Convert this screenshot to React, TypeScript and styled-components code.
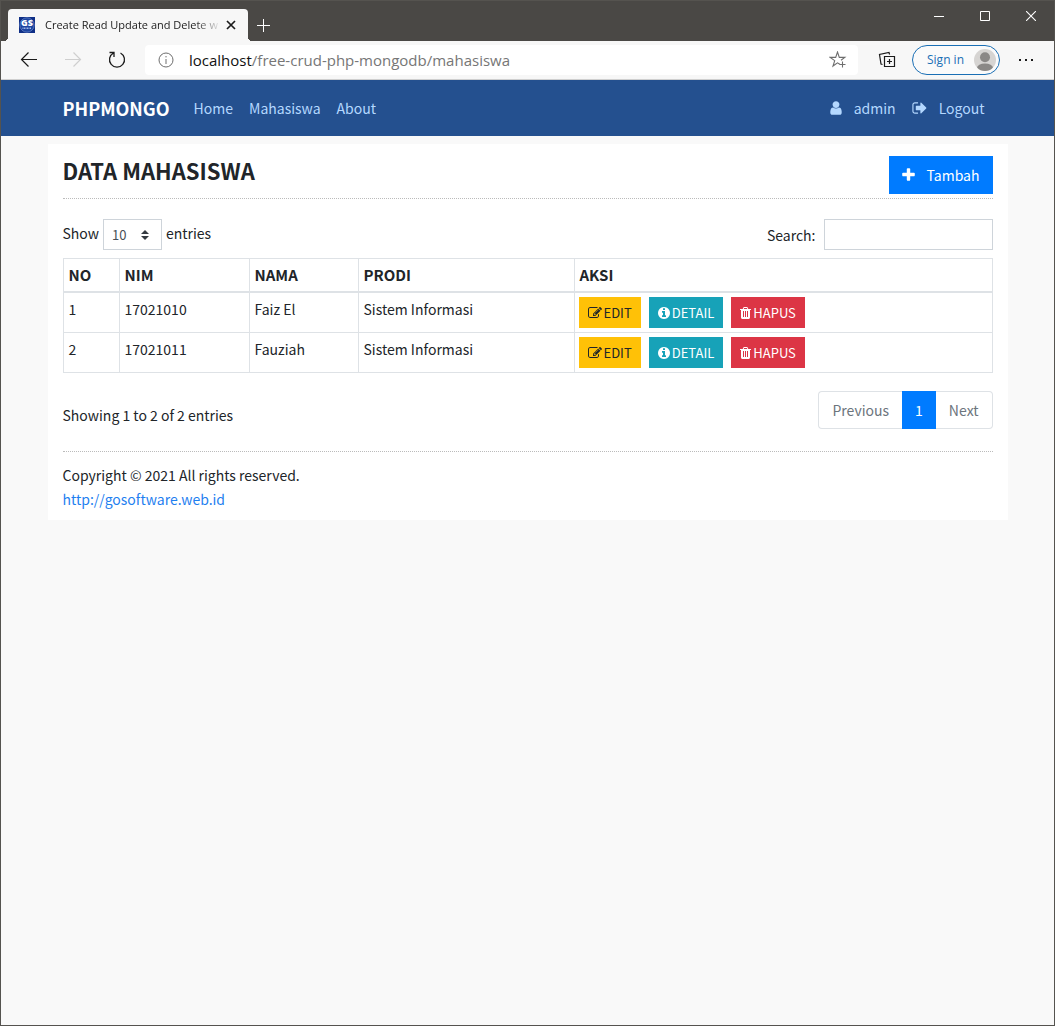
import React from "react";
import styled, { createGlobalStyle } from "styled-components";

const pageFont = `"Noto Sans CJK SC", "Open Sans", sans-serif`;
const chromeFont = `"Open Sans", "Noto Sans", sans-serif`;

const GlobalStyle = createGlobalStyle`
  *, *::before, *::after { box-sizing: border-box; }
  body { margin: 0; background: #f9f9f9; }
  button, input, select { font: inherit; }
`;

/* ---------- browser window ---------- */

const Window = styled.div`
  display: flex;
  flex-direction: column;
  min-height: 100vh;
  border: 1px solid #55534f;
  background: #f9f9f9;
  font-family: ${pageFont};
  font-size: 14px;
  line-height: 24px;
  color: #212529;
`;

const TitleBar = styled.div`
  display: flex;
  align-items: flex-end;
  height: 40px;
  padding-left: 7px;
  background: #4a4845;
  font-family: ${chromeFont};
`;

const Tab = styled.div`
  position: relative;
  display: flex;
  align-items: center;
  width: 240px;
  height: 32px;
  padding: 0 8px 0 11px;
  border-radius: 4px 4px 0 0;
  background: #f7f7f7;
  color: #1b1b1b;

  &::before,
  &::after {
    content: "";
    position: absolute;
    bottom: 0;
    width: 4px;
    height: 4px;
  }
  &::before {
    left: -4px;
    background: radial-gradient(circle at 0 0, transparent 4px, #f7f7f7 4px);
  }
  &::after {
    right: -4px;
    background: radial-gradient(circle at 100% 0, transparent 4px, #f7f7f7 4px);
  }
`;

const TabTitle = styled.span`
  flex: 1;
  min-width: 0;
  margin-left: 10px;
  overflow: hidden;
  white-space: nowrap;
  font-size: 11px;
  line-height: 20px;
  mask-image: linear-gradient(to right, #000 150px, transparent 176px);
`;

const PlainButton = styled.button<{ $width: number; $height: number }>`
  display: flex;
  align-items: center;
  justify-content: center;
  width: ${(p) => p.$width}px;
  height: ${(p) => p.$height}px;
  padding: 0;
  border: 0;
  background: none;
  color: inherit;
`;

const WindowButtons = styled.div`
  display: flex;
  align-self: flex-start;
  margin-left: auto;
  color: #fff;
`;

const NewTab = styled.div`
  color: #fff;
`;

const Toolbar = styled.div`
  display: flex;
  align-items: center;
  height: 39px;
  padding: 0 5px 0 6px;
  border-bottom: 1px solid #cfcfcf;
  background: #f7f7f7;
  font-family: ${chromeFont};
  color: #1b1b1b;
`;

const AddressBar = styled.div`
  display: flex;
  flex: 1;
  align-items: center;
  height: 30px;
  margin: 0 7px 0 6px;
  padding: 0 10px 0 13px;
  border-radius: 4px;
  background: #fff;
  color: #6e6e6e;
`;

const Address = styled.span`
  flex: 1;
  margin-left: 15px;
  font-size: 15px;
  color: #767676;

  b {
    font-weight: 400;
    color: #111;
  }
`;

const SignIn = styled.button`
  display: flex;
  align-items: center;
  justify-content: space-between;
  width: 88px;
  height: 30px;
  margin: 0 3px;
  padding: 0 3px 0 14px;
  border: 1px solid #1a6fb5;
  border-radius: 15px;
  background: #fafafa;
  color: #1a6fb5;
  font-size: 12px;
`;

/* ---------- site navigation ---------- */

const NavBar = styled.nav`
  height: 56px;
  background: #24508f;
`;

const Container = styled.div`
  width: 100%;
  max-width: 960px;
  margin: 0 auto;
  padding: 0 15px;
`;

const NavRow = styled(Container)`
  display: flex;
  align-items: center;
  height: 100%;
`;

const Brand = styled.a`
  margin-right: 24px;
  color: #fff;
  font-size: 18px;
  font-weight: 700;
  text-decoration: none;
`;

const NavLinks = styled.div`
  display: flex;
  gap: 16px;

  &:last-child {
    margin-left: auto;
    padding-right: 8px;
  }
`;

const NavLink = styled.a`
  display: flex;
  align-items: center;
  gap: 12px;
  color: #b4d8ff;
  text-decoration: none;
`;

/* ---------- page content ---------- */

const Content = styled(Container)`
  margin-top: 8px;
  padding-top: 12px;
  padding-bottom: 9px;
  background: #fff;
`;

const Heading = styled.header`
  display: flex;
  justify-content: space-between;
  padding-bottom: 4px;
  border-bottom: 1px dotted #bbb;
`;

const Title = styled.h1`
  margin: 0;
  font-size: 22px;
  line-height: 28px;
  font-weight: 700;
`;

const AddButton = styled.button`
  display: flex;
  align-items: center;
  gap: 12px;
  height: 38px;
  padding: 0 13px;
  border: 0;
  background: #007bff;
  color: #fff;
`;

const Controls = styled.div`
  display: flex;
  justify-content: space-between;
  margin: 20px 0 8px;
`;

const LengthLabel = styled.label`
  display: flex;
  gap: 4px;
  line-height: 28px;
`;

const SelectBox = styled.span`
  position: relative;
  display: block;

  svg {
    position: absolute;
    top: 11px;
    right: 13px;
    pointer-events: none;
  }
`;

const Select = styled.select`
  display: block;
  width: 59px;
  height: 31px;
  padding: 0 8px;
  border: 1px solid #ced4da;
  border-radius: 0;
  appearance: none;
  background: #fff;
  color: #495057;
  font-size: 13px;
`;

const SearchLabel = styled.label`
  display: flex;
  align-items: center;
  gap: 8px;
`;

const SearchInput = styled.input`
  width: 169px;
  height: 31px;
  padding: 0 8px;
  border: 1px solid #ced4da;
  background: #fff;
  font-size: 13px;
`;

const Table = styled.table`
  width: 100%;
  border: 1px solid #dee2e6;
  border-spacing: 0;
  table-layout: fixed;

  th,
  td {
    padding: 4px 5px;
    border-left: 1px solid #dee2e6;
    text-align: left;
    vertical-align: top;
  }
  th:first-child,
  td:first-child {
    border-left: 0;
  }
  td:last-child {
    padding: 4px;
  }
  th {
    border-bottom: 2px solid #dee2e6;
    font-size: 15px;
    font-weight: 700;
  }
  tr + tr td {
    border-top: 1px solid #dee2e6;
  }
`;

const Col = styled.col<{ $width?: number }>`
  width: ${(p) => (p.$width ? `${p.$width}px` : "auto")};
`;

const Actions = styled.div`
  display: flex;
  gap: 8px;
`;

const tones = {
  warning: ["#ffc107", "#212529"],
  info: ["#17a2b8", "#fff"],
  danger: ["#dc3545", "#fff"],
};

const ActionButton = styled.button<{ $tone: keyof typeof tones }>`
  display: flex;
  align-items: center;
  gap: 2px;
  height: 31px;
  padding: 0 9px;
  border: 0;
  background: ${(p) => tones[p.$tone][0]};
  color: ${(p) => tones[p.$tone][1]};
  font-size: 13px;
`;

const TableFooter = styled.div`
  display: flex;
  align-items: flex-start;
  justify-content: space-between;
  padding: 18px 0 22px;
  border-bottom: 1px dotted #bbb;
`;

const Info = styled.div`
  padding-top: 12px;
`;

const Pagination = styled.div`
  display: flex;
`;

const PageButton = styled.button<{ $active?: boolean }>`
  height: 38px;
  padding: 0 ${(p) => (p.$active ? 12 : 13)}px;
  border: 1px solid ${(p) => (p.$active ? "#007bff" : "#dee2e6")};
  background: ${(p) => (p.$active ? "#007bff" : "#fff")};
  color: ${(p) => (p.$active ? "#fff" : "#6c757d")};

  &:first-child {
    border-right: 0;
    border-radius: 4px 0 0 4px;
  }
  &:last-child {
    border-left: 0;
    border-radius: 0 4px 4px 0;
  }
`;

const Footer = styled.footer`
  padding-top: 11px;

  p {
    margin: 0;
  }
  a {
    color: #1f7ff0;
    text-decoration: none;
  }
`;

/* ---------- icons ---------- */

const glyphs = {
  user: {
    box: "256 0 1280 1792",
    width: 12,
    d: "M1536 1399q0 109-62.5 187t-150.5 78h-854q-88 0-150.5-78t-62.5-187q0-85 8.5-160.5t31.5-152 58.5-131 94-89 134.5-34.5q131 128 313 128t313-128q76 0 134.5 34.5t94 89 58.5 131 31.5 152 8.5 160.5zm-256-887q0 159-112.5 271.5t-271.5 112.5-271.5-112.5-112.5-271.5 112.5-271.5 271.5-112.5 271.5 112.5 112.5 271.5z",
  },
  signOut: {
    box: "64 0 1600 1792",
    width: 15,
    d: "M704 1440q0 4 1 20t.5 26.5-3 23.5-10 19.5-20.5 6.5h-320q-119 0-203.5-84.5t-84.5-203.5v-704q0-119 84.5-203.5t203.5-84.5h320q13 0 22.5 9.5t9.5 22.5q0 4 1 20t.5 26.5-3 23.5-10 19.5-20.5 6.5h-320q-66 0-113 47t-47 113v704q0 66 47 113t113 47h312l11.5 1 11.5 3 8 5.5 7 9 2 13.5zm928-544q0 26-19 45l-544 544q-19 19-45 19t-45-19-19-45v-288h-448q-26 0-45-19t-19-45v-384q0-26 19-45t45-19h448v-288q0-26 19-45t45-19 45 19l544 544q19 19 19 45z",
  },
  plus: {
    box: "192 0 1408 1792",
    width: 13,
    d: "M1600 736v192q0 40-28 68t-68 28h-416v416q0 40-28 68t-68 28h-192q-40 0-68-28t-28-68v-416h-416q-40 0-68-28t-28-68v-192q0-40 28-68t68-28h416v-416q0-40 28-68t68-28h192q40 0 68 28t28 68v416h416q40 0 68 28t28 68z",
  },
  edit: {
    box: "0 0 1792 1792",
    width: 14,
    d: "M888 1184l116-116-152-152-116 116v56h96v96h56zm440-720q-16-16-33 1l-350 350q-17 17-1 33t33-1l350-350q17-17 1-33zm80 594v190q0 119-84.5 203.5t-203.5 84.5h-832q-119 0-203.5-84.5t-84.5-203.5v-832q0-119 84.5-203.5t203.5-84.5h832q63 0 117 25 15 7 18 23 3 17-9 29l-49 49q-14 14-32 8-23-6-45-6h-832q-66 0-113 47t-47 113v832q0 66 47 113t113 47h832q66 0 113-47t47-113v-126q0-13 9-22l64-64q15-15 35-7t20 29zm-96-738l288 288-672 672h-288v-288zm444 132l-92 92-288-288 92-92q28-28 68-28t68 28l152 152q28 28 28 68t-28 68z",
  },
  info: {
    box: "128 0 1536 1792",
    width: 12,
    d: "M1152 1376v-160q0-14-9-23t-23-9h-96v-512q0-14-9-23t-23-9h-320q-14 0-23 9t-9 23v160q0 14 9 23t23 9h96v320h-96q-14 0-23 9t-9 23v160q0 14 9 23t23 9h448q14 0 23-9t9-23zm-128-896v-160q0-14-9-23t-23-9h-192q-14 0-23 9t-9 23v160q0 14 9 23t23 9h192q14 0 23-9t9-23zm640 416q0 209-103 385.5t-279.5 279.5-385.5 103-385.5-103-279.5-279.5-103-385.5 103-385.5 279.5-279.5 385.5-103 385.5 103 279.5 279.5 103 385.5z",
  },
  trash: {
    box: "192 0 1408 1792",
    width: 11,
    d: "M704 1376v-704q0-14-9-23t-23-9h-64q-14 0-23 9t-9 23v704q0 14 9 23t23 9h64q14 0 23-9t9-23zm256 0v-704q0-14-9-23t-23-9h-64q-14 0-23 9t-9 23v704q0 14 9 23t23 9h64q14 0 23-9t9-23zm256 0v-704q0-14-9-23t-23-9h-64q-14 0-23 9t-9 23v704q0 14 9 23t23 9h64q14 0 23-9t9-23zm-544-992h448l-48-117q-7-9-17-11h-317q-10 2-17 11zm928 32v64q0 14-9 23t-23 9h-96v948q0 83-47 143.5t-113 60.5h-832q-66 0-113-58.5t-47-141.5v-952h-96q-14 0-23-9t-9-23v-64q0-14 9-23t23-9h309l70-167q15-37 54-63t79-26h320q40 0 79 26t54 63l70 167h309q14 0 23 9t9 23z",
  },
};

function Glyph({ name, size = 14 }: { name: keyof typeof glyphs; size?: number }) {
  const g = glyphs[name];
  return (
    <svg width={g.width} height={size} viewBox={g.box} fill="currentColor" aria-hidden="true">
      <path d={g.d} />
    </svg>
  );
}

function Line({ d, size = 20, width = 1 }: { d: string; size?: number; width?: number }) {
  return (
    <svg
      width={size}
      height={size}
      viewBox={`0 0 ${size} ${size}`}
      fill="none"
      stroke="currentColor"
      strokeWidth={width}
      aria-hidden="true"
    >
      <path d={d} />
    </svg>
  );
}

const Faded = styled.span`
  display: flex;
  color: #cfcfcf;
`;

function Favicon() {
  return (
    <svg width="16" height="16" viewBox="0 0 16 16" aria-hidden="true">
      <rect width="16" height="16" fill="#0f2f86" />
      <circle cx="8" cy="8" r="7.2" fill="#1d45a0" stroke="#7f9bd6" strokeWidth="0.6" />
      <text x="8" y="9" textAnchor="middle" fontFamily="Open Sans, sans-serif" fontWeight="800" fontSize="9" fill="#fff">
        GS
      </text>
      <path d="M3.5 11.3h9" stroke="#9fb6e6" strokeWidth="1.6" strokeDasharray="1 .5" />
    </svg>
  );
}

function Avatar() {
  return (
    <svg width="22" height="22" viewBox="0 0 22 22" aria-hidden="true">
      <defs>
        <clipPath id="avatar-clip">
          <circle cx="11" cy="11" r="11" />
        </clipPath>
      </defs>
      <g clipPath="url(#avatar-clip)">
        <rect width="22" height="22" fill="#d6d4d2" />
        <circle cx="11" cy="8.3" r="5" fill="#8a8886" />
        <ellipse cx="11" cy="19" rx="8" ry="4.6" fill="#8a8886" />
      </g>
    </svg>
  );
}

/* ---------- app ---------- */

const students = [
  { no: 1, nim: "17021010", nama: "Faiz El", prodi: "Sistem Informasi" },
  { no: 2, nim: "17021011", nama: "Fauziah", prodi: "Sistem Informasi" },
];

export default function App() {
  return (
    <Window>
      <GlobalStyle />
      <TitleBar>
        <Tab>
          <Favicon />
          <TabTitle>Create Read Update and Delete w</TabTitle>
          <PlainButton $width={18} $height={20} aria-label="Close tab">
            <Line size={10} width={1.7} d="M1 1l8 8M9 1l-8 8" />
          </PlainButton>
        </Tab>
        <NewTab>
          <PlainButton $width={31} $height={32} aria-label="New tab">
            <Line size={13} d="M6.5 0v13M0 6.5h13" />
          </PlainButton>
        </NewTab>
        <WindowButtons>
          <PlainButton $width={46} $height={29} aria-label="Minimize">
            <Line size={10} d="M0 5.5h10" />
          </PlainButton>
          <PlainButton $width={46} $height={29} aria-label="Maximize">
            <Line size={10} d="M.5 .5h9v9h-9z" />
          </PlainButton>
          <PlainButton $width={46} $height={29} aria-label="Close">
            <Line size={10} width={1.1} d="M0 0l10 10M10 0l-10 10" />
          </PlainButton>
        </WindowButtons>
      </TitleBar>

      <Toolbar>
        <PlainButton $width={44} $height={38} aria-label="Back">
          <Line width={1.2} d="M18 9.5H2.5M9.5 2.5l-7 7 7 7" />
        </PlainButton>
        <PlainButton $width={44} $height={38} aria-label="Forward" disabled>
          <Faded>
            <Line width={1.2} d="M2 9.5h15.5M10.5 2.5l7 7-7 7" />
          </Faded>
        </PlainButton>
        <PlainButton $width={44} $height={38} aria-label="Refresh">
          <Line width={1.3} d="M13.5 3a7.5 7.5 0 1 1-7 0M2.5 2.5h4.500v4.500" />
        </PlainButton>
        <AddressBar>
          <svg width="16" height="16" viewBox="0 0 16 16" fill="none" stroke="currentColor" aria-hidden="true">
            <circle cx="8" cy="8" r="7" />
            <path d="M8 7v5M8 4v1.400" />
          </svg>
          <Address>
            <b>localhost</b>/free-crud-php-mongodb/mahasiswa
          </Address>
          <PlainButton $width={20} $height={28} aria-label="Add to favorites">
            <Line
              size={18}
              width={1.1}
              d="M10.8 13.2L8.5 11.8 4 15l1.7-5.4L1.2 6.4h5.5L8.5 1l1.8 5.4h5.5L12 9.2M13.5 10.5v6M10.5 13.5h6"
            />
          </PlainButton>
        </AddressBar>
        <PlainButton $width={44} $height={38} aria-label="Collections">
          <Line
            size={18}
            width={1.2}
            d="M6.5 5.5h10v10h-10zM11.5 8v5M9 10.5h5M4.5 13.5L3 13 1.500 3.500 11 1.500l.6 2"
          />
        </PlainButton>
        <SignIn>
          Sign in
          <Avatar />
        </SignIn>
        <PlainButton $width={46} $height={38} aria-label="Settings and more">
          <svg width="16" height="4" viewBox="0 0 16 4" fill="currentColor" aria-hidden="true">
            <path d="M1 1h2v2H1zM7 1h2v2H7zM13 1h2v2h-2z" />
          </svg>
        </PlainButton>
      </Toolbar>

      <NavBar>
        <NavRow>
          <Brand href="#">PHPMONGO</Brand>
          <NavLinks>
            <NavLink href="#home">Home</NavLink>
            <NavLink href="#mahasiswa">Mahasiswa</NavLink>
            <NavLink href="#about">About</NavLink>
          </NavLinks>
          <NavLinks>
            <NavLink href="#admin">
              <Glyph name="user" size={16} />
              admin
            </NavLink>
            <NavLink href="#logout">
              <Glyph name="signOut" size={16} />
              Logout
            </NavLink>
          </NavLinks>
        </NavRow>
      </NavBar>

      <Content as="main">
        <Heading>
          <Title>DATA MAHASISWA</Title>
          <AddButton>
            <Glyph name="plus" size={16} />
            Tambah
          </AddButton>
        </Heading>

        <Controls>
          <LengthLabel>
            Show
            <SelectBox>
              <Select defaultValue="10">
                <option>10</option>
                <option>25</option>
                <option>50</option>
                <option>100</option>
              </Select>
              <svg width="8" height="10" viewBox="0 0 8 10" fill="#343a40" aria-hidden="true">
                <path d="M4 0l4 4H0zM4 10L0 6h8z" />
              </svg>
            </SelectBox>
            entries
          </LengthLabel>
          <SearchLabel>
            Search:
            <SearchInput type="search" />
          </SearchLabel>
        </Controls>

        <Table>
          <colgroup>
            <Col $width={55} />
            <Col $width={130} />
            <Col $width={109} />
            <Col $width={216} />
            <Col />
          </colgroup>
          <thead>
            <tr>
              <th>NO</th>
              <th>NIM</th>
              <th>NAMA</th>
              <th>PRODI</th>
              <th>AKSI</th>
            </tr>
          </thead>
          <tbody>
            {students.map((s) => (
              <tr key={s.no}>
                <td>{s.no}</td>
                <td>{s.nim}</td>
                <td>{s.nama}</td>
                <td>{s.prodi}</td>
                <td>
                  <Actions>
                    <ActionButton $tone="warning">
                      <Glyph name="edit" />
                      EDIT
                    </ActionButton>
                    <ActionButton $tone="info">
                      <Glyph name="info" />
                      DETAIL
                    </ActionButton>
                    <ActionButton $tone="danger">
                      <Glyph name="trash" />
                      HAPUS
                    </ActionButton>
                  </Actions>
                </td>
              </tr>
            ))}
          </tbody>
        </Table>

        <TableFooter>
          <Info>Showing 1 to 2 of 2 entries</Info>
          <Pagination>
            <PageButton>Previous</PageButton>
            <PageButton $active>1</PageButton>
            <PageButton>Next</PageButton>
          </Pagination>
        </TableFooter>

        <Footer>
          <p>Copyright © 2021 All rights reserved.</p>
          <a href="http://gosoftware.web.id">http://gosoftware.web.id</a>
        </Footer>
      </Content>
    </Window>
  );
}
